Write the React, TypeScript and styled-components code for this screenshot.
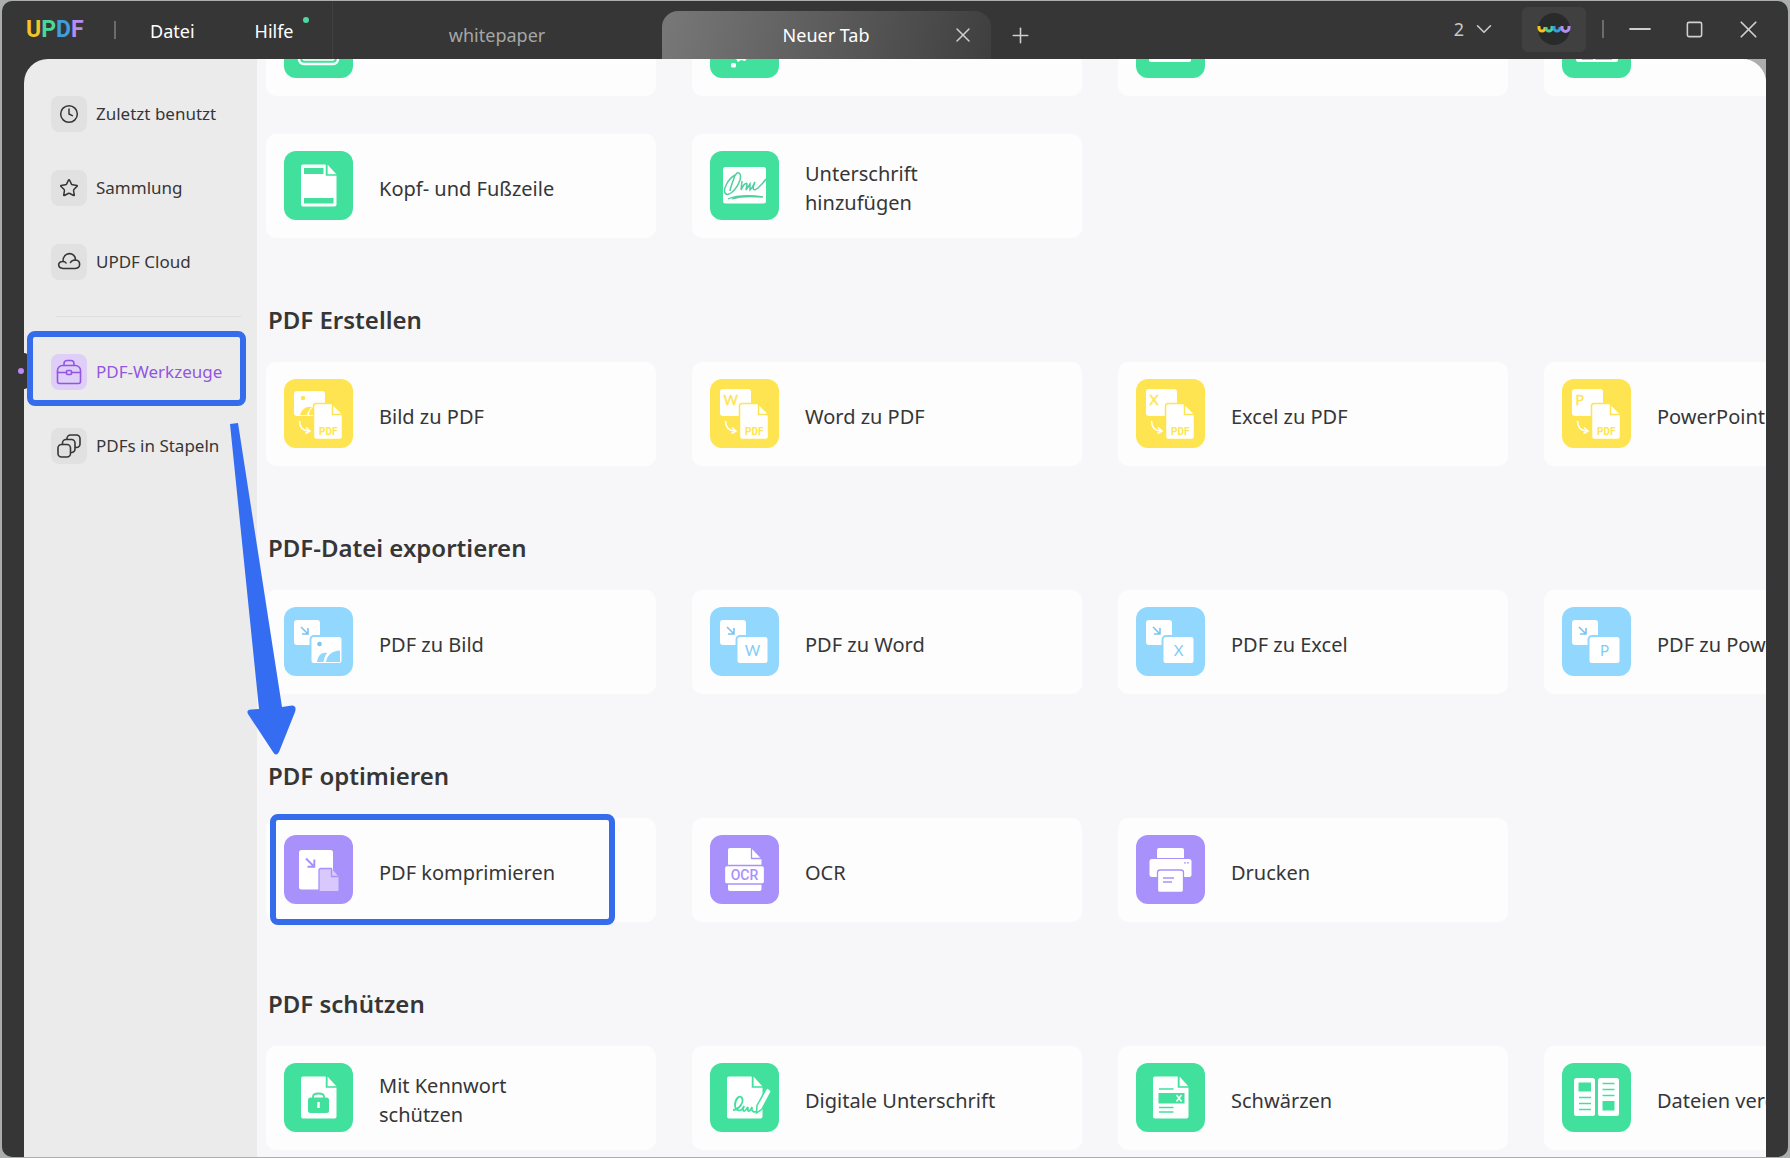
import React from "react";
import styled, { createGlobalStyle } from "styled-components";
import { ChevronDown, Clock, Minus, Plus, Square, Star, X } from "lucide-react";

const GREEN = "#41e19d";
const YELLOW = "#fee450";
const BLUE = "#92d8fe";
const PURPLE = "#a991fc";
const MARK = "#346cec";

const GlobalStyle = createGlobalStyle`
  *, *::before, *::after { box-sizing: border-box; }
  body {
    margin: 0;
    background: #acaeae;
    font-family: "Noto Sans", "Open Sans", sans-serif;
    color: #363637;
  }
  button { font: inherit; color: inherit; border: 0; padding: 0; background: none; cursor: pointer; }
  svg { flex: none; }
`;

const Window = styled.div`
  display: flex;
  flex-direction: column;
  height: calc(100vh - 2px);
  margin: 1px 2px;
  border-radius: 10px;
  background: #363636;
  overflow: hidden;
`;

/* ---------- title bar ---------- */

const TitleBar = styled.header`
  display: flex;
  align-items: stretch;
  flex: none;
  height: 58px;
  padding: 0 4px 0 24px;
  color: #fff;
`;

const Brand = styled.div`
  display: flex;
  align-items: center;
  width: 88px;
  font: 700 23px/24px Roboto, sans-serif;
`;

const Letter = styled.span<{ $color: string }>`
  color: ${(p) => p.$color};
`;

const Divider = styled.span`
  align-self: center;
  width: 2px;
  height: 18px;
  background: #6c6c6c;
`;

const Menu = styled.nav`
  display: flex;
  align-items: center;
  gap: 60px;
  padding: 2px 38px 0 34px;
  border-right: 1px solid #404040;
  font-size: 18px;
  line-height: 24px;
`;

const MenuButton = styled.button`
  position: relative;
`;

const NewsDot = styled.span`
  position: absolute;
  top: -2px;
  right: -15px;
  width: 6px;
  height: 6px;
  border-radius: 50%;
  background: #4bd9a4;
`;

const Tabs = styled.div`
  display: flex;
  align-items: stretch;
  flex: 1;
  padding-top: 10px;
`;

const Tab = styled.div<{ $active?: boolean }>`
  display: flex;
  align-items: center;
  width: 329px;
  padding: ${(p) => (p.$active ? "0 20px 0 36px" : "0 20px")};
  border-radius: 16px 16px 0 0;
  background: ${(p) => (p.$active ? "linear-gradient(100deg, #787878, #3f3f3f)" : "none")};
  color: ${(p) => (p.$active ? "#fff" : "#a6a6a6")};
`;

const TabLabel = styled.button`
  flex: 1;
  font-size: 18px;
  line-height: 24px;
`;

const IconButton = styled.button<{ $width: number }>`
  display: flex;
  align-items: center;
  justify-content: center;
  width: ${(p) => p.$width}px;
  color: #cfcfcf;
`;

const WindowControls = styled.div`
  display: flex;
  align-items: stretch;
  padding-bottom: 2px;
`;

const CountButton = styled.button`
  display: flex;
  align-items: center;
  gap: 7px;
  margin-right: 25px;
  color: #c8c8c8;
  font-size: 18px;
`;

const AvatarButton = styled.button`
  align-self: center;
  display: flex;
  align-items: center;
  justify-content: center;
  width: 64px;
  height: 45px;
  margin-right: 16px;
  border-radius: 6px;
  background: #404040;
`;

/* ---------- body ---------- */

const Body = styled.div`
  position: relative;
  display: flex;
  flex: 1;
  min-height: 0;
  padding: 0 22px;
`;

const Sidebar = styled.aside`
  flex: none;
  width: 233px;
  padding: 27px 16px 0 18px;
  border-radius: 24px 0 0 0;
  background: #ecebec;
`;

const SideNav = styled.nav`
  display: flex;
  flex-direction: column;
`;

const SideItem = styled.button<{ $active?: boolean }>`
  position: relative;
  display: flex;
  align-items: center;
  gap: 9px;
  height: 54px;
  margin-bottom: 20px;
  padding: 2px 0 0 9px;
  color: ${(p) => (p.$active ? "#9256e0" : "#363637")};
  font-size: 17px;
  line-height: 24px;
  text-align: left;
  white-space: nowrap;
`;

const SideIcon = styled.span<{ $active?: boolean }>`
  display: flex;
  align-items: center;
  justify-content: center;
  width: 36px;
  height: 36px;
  border-radius: 8px;
  background: ${(p) => (p.$active ? "#dfcef7" : "#e1e1e1")};
`;

const SideRule = styled.hr`
  width: calc(100% - 14px);
  height: 1px;
  margin: 8px 0 27px 14px;
  border: 0;
  background: #dedede;
`;

const Notch = styled.span`
  position: absolute;
  top: 9px;
  left: -18px;
  width: 4px;
  height: 36px;
  border-radius: 0 4px 4px 0;
  background: #363636;
`;

const ActiveDot = styled.span`
  position: absolute;
  top: 24px;
  left: -24px;
  width: 6px;
  height: 6px;
  border-radius: 50%;
  background: #bb88f5;
`;

const SideFrame = styled.span`
  position: absolute;
  top: -13px;
  left: -15px;
  right: -5px;
  height: 75px;
  border: 6px solid ${MARK};
  border-radius: 8px;
`;

const ArrowMark = styled.svg`
  position: absolute;
  top: 362px;
  left: 224px;
  pointer-events: none;
`;

const Corner = styled.div`
  display: flex;
  flex: 1;
  min-width: 0;
  background: #adadad;
`;

const Main = styled.main`
  flex: 1;
  min-width: 0;
  padding-left: 9px;
  border-radius: 0 24px 0 0;
  background: #f7f6f8;
  overflow: hidden;
`;

const Scrolled = styled.div`
  margin-top: -67px;
`;

const Section = styled.section`
  padding-bottom: 20px;
`;

const Heading = styled.h2`
  margin: 0;
  padding: 45px 2px 25px;
  font-size: 24px;
  line-height: 34px;
  font-weight: 600;
`;

const Grid = styled.div`
  display: grid;
  grid-template-columns: repeat(4, 390px);
  gap: 38px 36px;
`;

const Card = styled.button`
  position: relative;
  display: flex;
  align-items: center;
  gap: 26px;
  height: 104px;
  padding: 0 0 2px 18px;
  border-radius: 10px;
  background: #fdfdfe;
  text-align: left;
`;

const CardLabel = styled.span`
  max-width: 200px;
  padding-top: 6px;
  font-size: 20px;
  line-height: 29px;
`;

const CardFrame = styled.span`
  position: absolute;
  top: -4px;
  left: 4px;
  width: 345px;
  height: 111px;
  border: 6px solid ${MARK};
  border-radius: 8px;
`;

/* ---------- tool icons ---------- */

type Glyph = React.ReactNode;

const Tile = ({ color, children }: { color: string; children: Glyph }) => (
  <svg width="69" height="69" viewBox="0 0 69 69" fill="none" aria-hidden="true">
    <rect width="69" height="69" rx="12" fill={color} />
    {children}
  </svg>
);

const Page = ({ color }: { color: string }) => (
  <>
    <path d="M19 13.500H43V23.500H52.500V53.500a2 2 0 0 1-2 2H19a2 2 0 0 1-2-2V15.500a2 2 0 0 1 2-2Z" fill="#fff" />
    <path d="M43.500 13.500L52.500 23.500H43.500Z" fill="#fff" />
    <path d="M42.500 13V24H53" stroke={color} strokeWidth="1.500" />
  </>
);

const Hills = ({ color }: { color: string }) => (
  <>
    <path d="M33 55C34 48 38 45 43 46C41 49 40 52 39.500 55Z" fill={color} />
    <path d="M42 55C43 48 48 44 56 43.500V55Z" fill={color} />
  </>
);

const ToPdf = ({ letter }: { letter?: string }) => (
  <Tile color={YELLOW}>
    {letter ? (
      <>
        <rect x="10" y="10" width="31" height="27" rx="3" fill="#fff" />
        <text x="13.500" y="25.500" fontFamily="Lato, sans-serif" fontSize="14" fill={YELLOW} stroke={YELLOW} strokeWidth=".4">{letter}</text>
      </>
    ) : (
      <>
        <rect x="10" y="12" width="31" height="25" rx="3" fill="#fff" />
        <circle cx="19" cy="19" r="2.200" fill={YELLOW} />
        <path d="M16 36C18 30 22 27 28 28C25 30 24 33 23 36Z" fill={YELLOW} />
        <path d="M25 36C25 32 27 29 31 27V36Z" fill={YELLOW} />
      </>
    )}
    <path d="M32 24.500H48L58.500 35V58a2.500 2.500 0 0 1-2.500 2.500H32a2.500 2.500 0 0 1-2.500-2.500V27a2.500 2.500 0 0 1 2.500-2.500Z" fill="#fff" stroke={YELLOW} strokeWidth="1.500" />
    <path d="M48.500 25V35.500H58.500" stroke={YELLOW} strokeWidth="1.500" />
    <text x="35" y="56" fontFamily="Roboto, sans-serif" fontWeight="700" fontSize="10" fill={YELLOW}>PDF</text>
    <path d="M15.500 42C15.500 48 18 51.500 25 52" stroke="#fff" strokeWidth="1.600" />
    <path d="M22 48.500L26 52L21.500 54.500" stroke="#fff" strokeWidth="1.500" />
  </Tile>
);

const FromPdf = ({ letter }: { letter?: string }) => (
  <Tile color={BLUE}>
    <rect x="10" y="13" width="26" height="25" rx="3" fill="#fff" />
    <path d="M17 20L24 27M24 21V27H18" stroke="#7cc4ee" strokeWidth="1.600" />
    <rect x="26.500" y="29" width="32" height="28" rx="3.500" fill="#fff" stroke={BLUE} strokeWidth="2" />
    {letter ? (
      <text x="42.500" y="48.500" textAnchor="middle" fontFamily="Lato, sans-serif" fontSize="15" fill="#7fccf8">{letter}</text>
    ) : (
      <>
        <circle cx="35.500" cy="37" r="2.300" fill="#7cc4ee" />
        <Hills color={BLUE} />
      </>
    )}
  </Tile>
);

const CompressIcon = () => (
  <Tile color={PURPLE}>
    <rect x="15" y="15" width="34" height="39.500" rx="2.500" fill="#fff" />
    <path d="M22 23.500L30 31.500M30.300 24.500V31.800H23.500" stroke={PURPLE} strokeWidth="2" />
    <path d="M37 33.500H47.500L54.500 41.500V56H35V35.500a2 2 0 0 1 2-2Z" fill="#d8c8fe" />
    <path d="M35 56V35.500a2 2 0 0 1 2-2H47.500V41.500H54.500" stroke={PURPLE} strokeWidth="1.300" />
  </Tile>
);

const OcrIcon = () => (
  <Tile color={PURPLE}>
    <path d="M20 13H41L51.500 24V54a2 2 0 0 1-2 2H20a2 2 0 0 1-2-2V15a2 2 0 0 1 2-2Z" fill="#fff" />
    <path d="M41.500 13V23.500H52" stroke={PURPLE} strokeWidth="1.300" />
    <rect x="14.500" y="30.500" width="40" height="18.500" rx="2.500" fill="#fff" stroke={PURPLE} strokeWidth="1.300" />
    <text x="34.500" y="45" textAnchor="middle" fontFamily="Roboto, sans-serif" fontWeight="500" fontSize="14" fill={PURPLE}>OCR</text>
  </Tile>
);

const PrinterIcon = () => (
  <Tile color={PURPLE}>
    <path d="M23 13H46a2 2 0 0 1 2 2V23H21V15a2 2 0 0 1 2-2Z" fill="#fff" />
    <rect x="13.500" y="24" width="42" height="18" rx="2.500" fill="#fff" />
    <circle cx="49" cy="27.800" r=".9" fill={PURPLE} />
    <circle cx="52" cy="27.800" r=".9" fill={PURPLE} />
    <rect x="21.500" y="35" width="26" height="22.500" rx="2.500" fill="#fff" stroke={PURPLE} strokeWidth="1.300" />
    <path d="M27 43H38M27 47H36" stroke={PURPLE} strokeWidth="1.300" />
  </Tile>
);

const LockIcon = () => (
  <Tile color={GREEN}>
    <Page color={GREEN} />
    <rect x="24" y="34.500" width="21" height="15.500" rx="2.500" fill={GREEN} />
    <path d="M29 35V33.500C29 29.500 40 29.500 40 33.500V35" stroke={GREEN} strokeWidth="1.800" />
    <path d="M34.500 39V45" stroke="#fff" strokeWidth="2.500" />
  </Tile>
);

const SignIcon = () => (
  <Tile color={GREEN}>
    <Page color={GREEN} />
    <path d="M23 47C30 46 34 39 32 35C30 31 25 36 25 42C25 48 31 50 34 43C32 49 34 50 38 44C37 50 40 49 42 44C41 49 44 50 50 47.500" stroke={GREEN} strokeWidth="1.800" />
    <path d="M57 24.500L61.500 28L52 46L46.500 50L47 42.500Z" fill="#fff" stroke={GREEN} strokeWidth="1.500" />
  </Tile>
);

const RedactIcon = () => (
  <Tile color={GREEN}>
    <Page color={GREEN} />
    <rect x="22.500" y="30" width="26" height="10.500" fill={GREEN} />
    <path d="M23 26H37.500M23 44.500H37.500M23 49H37.500" stroke={GREEN} strokeWidth="1.500" />
    <path d="M40.500 32L45.500 38.500M45.500 32L40.500 38.500" stroke="#fff" strokeWidth="1.500" />
  </Tile>
);

const CompareIcon = () => (
  <Tile color={GREEN}>
    <rect x="12" y="15" width="21" height="38" rx="2.500" fill="#fff" />
    <rect x="36" y="15" width="21" height="38" rx="2.500" fill="#fff" />
    <rect x="16.500" y="19.500" width="12.500" height="9" fill={GREEN} />
    <rect x="40.500" y="38" width="12" height="9.500" fill={GREEN} />
    <path d="M17 34.500H29M17 40.500H29M17 46.500H29M40.500 20.500H52.500M40.500 26.500H52.500M40.500 32.500H52.500" stroke={GREEN} strokeWidth="1.500" />
  </Tile>
);

const HeaderFooterIcon = () => (
  <Tile color={GREEN}>
    <Page color={GREEN} />
    <rect x="20" y="17" width="19.500" height="6" fill={GREEN} />
    <rect x="20" y="47" width="29.500" height="5.500" fill={GREEN} />
  </Tile>
);

const AddSignatureIcon = () => (
  <Tile color={GREEN}>
    <rect x="13" y="16" width="43" height="36.500" rx="2.500" fill="#fff" />
    <path d="M25 24C18 28 13 38 15 42C18 47 27 38 30 29C32 21 27 19 24 27C22 33 20 38 20 40M32 30L31 39C33 34 36 31 37 33L36 39L40 33L40 39C43 37 44 32 45 31C42 38 43 41 48 37C51 34 54 31 56 28" stroke="#4fcf9f" strokeWidth="1.500" />
    <path d="M18 48C28 44 40 44 53 46C40 45 30 45 22 48" stroke="#4fcf9f" strokeWidth="1.300" />
  </Tile>
);

const WatermarkIcon = () => (
  <Tile color={GREEN}>
    <rect x="15" y="14" width="39" height="41" rx="5" stroke="#fff" strokeWidth="2.500" />
    <rect x="19" y="18" width="31" height="33" rx="1.500" stroke="#fff" strokeWidth="1.500" />
  </Tile>
);

const BackgroundIcon = () => (
  <Tile color={GREEN}>
    <path d="M25 48L28 53L31 51L35 52L38 48Z" fill="#fff" />
    <rect x="21" y="54" width="5" height="4.500" rx="1.500" fill="#fff" />
  </Tile>
);

const CropIcon = () => (
  <Tile color={GREEN}>
    <rect x="13" y="16" width="42" height="37" rx="2" fill="#fff" />
  </Tile>
);

const PagesIcon = () => (
  <Tile color={GREEN}>
    <rect x="14" y="16" width="42" height="37" rx="2.500" fill="#fff" />
    <path d="M20 50H31M33.500 50H50" stroke={GREEN} strokeWidth="1.500" />
  </Tile>
);

/* ---------- sidebar icons ---------- */

const line = { fill: "none", stroke: "currentColor", strokeWidth: 1.6, strokeLinecap: "round", strokeLinejoin: "round" } as const;

const CloudGlyph = () => (
  <svg width="24" height="24" viewBox="0 0 24 24" {...line} aria-hidden="true">
    <path d="M6 18.500C0 18 .5 11 6 11.500C6 1 18.500 1.500 18.500 10C24 10.500 24 18 18.500 18.500Z" />
    <path d="M6 11.500C7.500 11.500 8.500 12 9 13M18.500 10C16.500 10 14.500 10.500 13.500 12.500" />
  </svg>
);

const ToolboxGlyph = () => (
  <svg width="26" height="26" viewBox="0 0 26 26" {...line} aria-hidden="true">
    <path d="M1.500 13.500V11.500a5 5 0 0 1 5-5h13a5 5 0 0 1 5 5V22.500a2 2 0 0 1-2 2h-19a2 2 0 0 1-2-2Z" />
    <path d="M8 6V4.500a3 3 0 0 1 3-3h4a3 3 0 0 1 3 3V6M1.500 13.500H10.500M15.500 13.500H24.500" />
    <rect x="10.500" y="11.500" width="5" height="4" rx="1" />
  </svg>
);

const StackGlyph = () => (
  <svg width="24" height="24" viewBox="0 0 24 24" {...line} aria-hidden="true">
    <rect x="1" y="10.500" width="12.500" height="12.500" rx="3.500" />
    <path d="M5.500 10V9a3.500 3.500 0 0 1 3.500-3.500h5.500a3.500 3.500 0 0 1 3.500 3.500v6a3.500 3.500 0 0 1-3.500 3.500" />
    <path d="M10 5V4.500a3.500 3.500 0 0 1 3.500-3.500h6a3.500 3.500 0 0 1 3.500 3.500v5.500a3.500 3.500 0 0 1-3.500 3.500H18.500" />
  </svg>
);

const AvatarGlyph = () => (
  <svg width="34" height="34" viewBox="0 0 34 34" fill="none" strokeWidth="3" aria-hidden="true">
    <circle cx="17" cy="17" r="16" fill="#292a2a" />
    <path d="M2 14V16a3 3 0 0 0 6 0V15" stroke="#f5c21c" />
    <path d="M9 15V16a3 3 0 0 0 6 0V14" stroke="#45d397" />
    <path d="M17 14V16a3 3 0 0 0 6 0V15" stroke="#359de0" />
    <path d="M25 14V16a3 3 0 0 0 7 0V14" stroke="#b78cf0" />
  </svg>
);

/* ---------- page ---------- */

type Tool = { label: React.ReactNode; icon: React.ReactNode; framed?: boolean };

const sections: { title: string; tools: Tool[] }[] = [
  {
    title: "PDF Erstellen",
    tools: [
      { label: "Bild zu PDF", icon: <ToPdf /> },
      { label: "Word zu PDF", icon: <ToPdf letter="W" /> },
      { label: "Excel zu PDF", icon: <ToPdf letter="X" /> },
      { label: "PowerPoint zu PDF", icon: <ToPdf letter="P" /> },
    ],
  },
  {
    title: "PDF-Datei exportieren",
    tools: [
      { label: "PDF zu Bild", icon: <FromPdf /> },
      { label: "PDF zu Word", icon: <FromPdf letter="W" /> },
      { label: "PDF zu Excel", icon: <FromPdf letter="X" /> },
      { label: "PDF zu PowerPoint", icon: <FromPdf letter="P" /> },
    ],
  },
  {
    title: "PDF optimieren",
    tools: [
      { label: "PDF komprimieren", icon: <CompressIcon />, framed: true },
      { label: "OCR", icon: <OcrIcon /> },
      { label: "Drucken", icon: <PrinterIcon /> },
    ],
  },
  {
    title: "PDF schützen",
    tools: [
      { label: "Mit Kennwort schützen", icon: <LockIcon /> },
      { label: "Digitale Unterschrift", icon: <SignIcon /> },
      { label: "Schwärzen", icon: <RedactIcon /> },
      { label: "Dateien vergleichen", icon: <CompareIcon /> },
    ],
  },
];

const ToolCard = ({ label, icon, framed }: Tool) => (
  <Card type="button">
    {icon}
    <CardLabel>{label}</CardLabel>
    {framed && <CardFrame />}
  </Card>
);

export default function App() {
  return (
    <>
      <GlobalStyle />
      <Window>
        <TitleBar>
          <Brand>
            <Letter $color="#f5c526">U</Letter>
            <Letter $color="#4bd89c">P</Letter>
            <Letter $color="#3f9fdc">D</Letter>
            <Letter $color="#b78df2">F</Letter>
          </Brand>
          <Divider />
          <Menu>
            <MenuButton type="button">Datei</MenuButton>
            <MenuButton type="button">Hilfe<NewsDot /></MenuButton>
          </Menu>
          <Tabs>
            <Tab><TabLabel type="button">whitepaper</TabLabel></Tab>
            <Tab $active>
              <TabLabel type="button">Neuer Tab</TabLabel>
              <IconButton $width={16} type="button" aria-label="Tab schließen">
                <X size={24} strokeWidth={1.5} />
              </IconButton>
            </Tab>
            <IconButton $width={60} type="button" aria-label="Neuer Tab">
              <Plus size={25} strokeWidth={1.5} />
            </IconButton>
          </Tabs>
          <WindowControls>
            <CountButton type="button">
              2
              <ChevronDown size={26} strokeWidth={1.5} />
            </CountButton>
            <AvatarButton type="button" aria-label="Konto"><AvatarGlyph /></AvatarButton>
            <Divider />
            <IconButton $width={72} type="button" aria-label="Minimieren">
              <Minus size={34} strokeWidth={1.3} />
            </IconButton>
            <IconButton $width={36} type="button" aria-label="Maximieren">
              <Square size={19} strokeWidth={2} />
            </IconButton>
            <IconButton $width={72} type="button" aria-label="Schließen">
              <X size={29} strokeWidth={1.4} />
            </IconButton>
          </WindowControls>
        </TitleBar>
        <Body>
          <Sidebar>
            <SideNav>
              <SideItem type="button"><SideIcon><Clock size={20} strokeWidth={1.8} /></SideIcon>Zuletzt benutzt</SideItem>
              <SideItem type="button"><SideIcon><Star size={20} strokeWidth={1.8} /></SideIcon>Sammlung</SideItem>
              <SideItem type="button"><SideIcon><CloudGlyph /></SideIcon>UPDF Cloud</SideItem>
              <SideRule />
              <SideItem type="button" $active>
                <Notch />
                <ActiveDot />
                <SideIcon $active><ToolboxGlyph /></SideIcon>PDF-Werkzeuge
                <SideFrame />
              </SideItem>
              <SideItem type="button"><SideIcon><StackGlyph /></SideIcon>PDFs in Stapeln</SideItem>
            </SideNav>
          </Sidebar>
          <Corner>
            <Main>
              <Scrolled>
                <Section>
                  <Grid>
                    <Card type="button" aria-label="Wasserzeichen"><WatermarkIcon /></Card>
                    <Card type="button" aria-label="Hintergrund"><BackgroundIcon /></Card>
                    <Card type="button" aria-label="Zuschneiden"><CropIcon /></Card>
                    <Card type="button" aria-label="Seiten"><PagesIcon /></Card>
                    <ToolCard label="Kopf- und Fußzeile" icon={<HeaderFooterIcon />} />
                    <ToolCard label="Unterschrift hinzufügen" icon={<AddSignatureIcon />} />
                  </Grid>
                </Section>
                {sections.map((section) => (
                  <Section key={section.title}>
                    <Heading>{section.title}</Heading>
                    <Grid>
                      {section.tools.map((tool, i) => (
                        <ToolCard key={i} {...tool} />
                      ))}
                    </Grid>
                  </Section>
                ))}
              </Scrolled>
            </Main>
          </Corner>
          <ArrowMark width="74" height="340" viewBox="0 0 74 340" aria-hidden="true">
            <path
              d="M4 3L12 2L56 286L66 284.500Q71 285 69 291L53 331Q50 336 47 331L22 293Q20 289 25 288.500L33 288Z"
              fill="#346df1"
            />
          </ArrowMark>
        </Body>
      </Window>
    </>
  );
}
